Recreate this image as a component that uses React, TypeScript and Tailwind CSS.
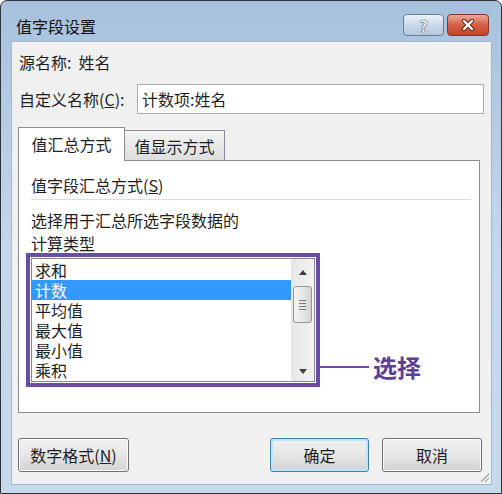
const items = ['求和', '计数', '平均值', '最大值', '最小值', '乘积'];

const font = "font-['Noto_Sans_CJK_SC','Noto_Sans',sans-serif]";

function WinButton({
  children,
  width,
  primary = false,
}: {
  children: React.ReactNode;
  width: string;
  primary?: boolean;
}) {
  return (
    <div
      className={`${width} flex h-[34px] items-center justify-center rounded-[3px] border ${
        primary
          ? 'border-[#3c7fb1] shadow-[inset_0_0_0_2px_#bfe3f7]'
          : 'border-[#707070] shadow-[inset_0_0_0_1px_#fcfcfc]'
      } bg-linear-to-b from-[#f2f2f2] via-[#e6e6e6] to-[#d3d3d3] text-[16px] leading-[20px] text-[#1e1e1e]`}
    >
      {children}
    </div>
  );
}

export default function App() {
  return (
    <div
      className={`${font} flex h-[494px] w-[502px] flex-col overflow-hidden rounded-t-[7px] border border-[#2f3338] bg-linear-to-b from-[#a7c1dd] via-[#c3d7ec] to-[#c6daee]`}
    >
      {/* title bar */}
      <div className="flex h-[40px] items-start justify-between pl-[15px] pr-[12px]">
        <div className="pt-[15px] text-[16px] leading-[20px] text-[#111]">值字段设置</div>
        <div className="flex gap-[3px] pt-[13px]">
          <div className="flex h-[22px] w-[41px] items-center justify-center rounded-[4px] border border-[#6b7c92] bg-linear-to-b from-[#eaf1f8] via-[#cad9ea] to-[#b3c7dd]">
            <span className="text-[15px] font-bold leading-none text-[#f6f8fb] [text-shadow:0_0_1px_#33445c,0_0_1px_#33445c,0_0_1px_#33445c]">
              ?
            </span>
          </div>
          <div className="flex h-[22px] w-[42px] items-center justify-center rounded-[4px] border border-[#80372a] bg-linear-to-b from-[#eaa897] via-[#d45e44] to-[#c4452b]">
            <svg width="16" height="12" viewBox="0 0 16 12">
              <path d="M4 2 L12 10 M12 2 L4 10" stroke="#5b2418" strokeWidth="4.2" strokeLinecap="round" />
              <path d="M4 2 L12 10 M12 2 L4 10" stroke="#ffffff" strokeWidth="2.4" strokeLinecap="round" />
            </svg>
          </div>
        </div>
      </div>

      {/* client area */}
      <div className="relative ml-[10px] mr-[9px] flex h-[444px] flex-col border border-[#a3b8cf] bg-[#f0f0f0] pl-[7px] pr-[7px] pt-[10px] text-[16px] leading-[20px] text-[#1e1e1e]">
        <div className="h-[20px]">源名称:&nbsp;&nbsp;姓名</div>

        <div className="mt-[12px] flex h-[30px] items-center justify-between">
          <span>
            自定义名称(<span className="underline">C</span>):
          </span>
          <div className="flex h-[30px] w-[347px] items-center border border-[#abadb3] bg-white pl-[4px]">
            计数项:姓名
          </div>
        </div>

        {/* tabs */}
        <div className="relative z-10 -mb-px -ml-px mt-[13px] flex h-[34px] items-end">
          <div className="flex h-[34px] w-[107px] items-center justify-center border-x border-t border-[#898c95] bg-white pb-[1px]">
            值汇总方式
          </div>
          <div className="-ml-px flex h-[31px] w-[101px] items-center justify-center border border-[#898c95] bg-linear-to-b from-[#f3f3f3] to-[#dedede]">
            值显示方式
          </div>
        </div>

        {/* tab panel */}
        <div className="-ml-px flex h-[253px] w-[462px] flex-col border border-[#898c95] bg-white pl-[12px] pt-[14px]">
          <div className="h-[20px]">
            值字段汇总方式(<span className="underline">S</span>)
          </div>
          <div className="mr-[8px] mt-[4px] h-px bg-[#d5dfe5]" />
          <div className="mt-[10px] h-[20px]">选择用于汇总所选字段数据的</div>
          <div className="mt-[3px] h-[20px]">计算类型</div>

          <div className="-ml-[5px] flex items-end">
            <div className="h-[134px] w-[294px] border-[4px] border-[#6a4ea3] bg-white p-px">
              <div className="flex h-full border border-[#828790] bg-white">
                <div className="flex-1 pt-px">
                  {items.map((it) => (
                    <div
                      key={it}
                      className={`h-[20px] pl-[3px] ${it === '计数' ? 'bg-[#3399ff] text-white' : ''}`}
                    >
                      {it}
                    </div>
                  ))}
                </div>
                <div className="flex w-[23px] flex-col items-center bg-linear-to-r from-[#e6e6e6] to-[#f3f3f3]">
                  <div className="flex h-[26px] w-full items-center justify-center">
                    <svg width="8" height="5" viewBox="0 0 8 5">
                      <path d="M0 5 L4 0 L8 5 Z" fill="#3d3d3d" />
                    </svg>
                  </div>
                  <div className="mt-px flex h-[37px] w-[19px] flex-col items-center justify-center gap-[2px] rounded-[3px] border border-[#959595] bg-linear-to-r from-[#f4f4f4] via-[#e8e8e8] to-[#d4d4d4]">
                    <div className="h-px w-[7px] bg-[#7a7a7a]" />
                    <div className="h-px w-[7px] bg-[#7a7a7a]" />
                    <div className="h-px w-[7px] bg-[#7a7a7a]" />
                    <div className="h-px w-[7px] bg-[#7a7a7a]" />
                  </div>
                  <div className="flex-1" />
                  <div className="flex h-[20px] w-full items-center justify-center">
                    <svg width="8" height="5" viewBox="0 0 8 5">
                      <path d="M0 0 L8 0 L4 5 Z" fill="#3d3d3d" />
                    </svg>
                  </div>
                </div>
              </div>
            </div>
            <div className="mb-[8px] flex items-center">
              <div className="h-[2px] w-[49px] bg-[#6a4ea3]" />
              <span className="ml-[4px] text-[24px] font-bold leading-[24px] text-[#5b3f99]">选择</span>
            </div>
          </div>
        </div>

        {/* buttons */}
        <div className="-ml-px mr-[2px] mt-[25px] flex items-center">
          <WinButton width="w-[111px]">
            数字格式(<span className="underline">N</span>)
          </WinButton>
          <div className="ml-auto flex gap-[13px]">
            <WinButton width="w-[99px]" primary>
              确定
            </WinButton>
            <WinButton width="w-[100px]">取消</WinButton>
          </div>
        </div>

        <svg className="absolute bottom-[1px] right-[1px]" width="12" height="12" viewBox="0 0 12 12">
          <path d="M11 3 L3 11 M11 7 L7 11" stroke="#9aa3ad" strokeWidth="1.2" />
          <path d="M12 4 L4 12 M12 8 L8 12" stroke="#ffffff" strokeWidth="1" />
        </svg>
      </div>
    </div>
  );
}
